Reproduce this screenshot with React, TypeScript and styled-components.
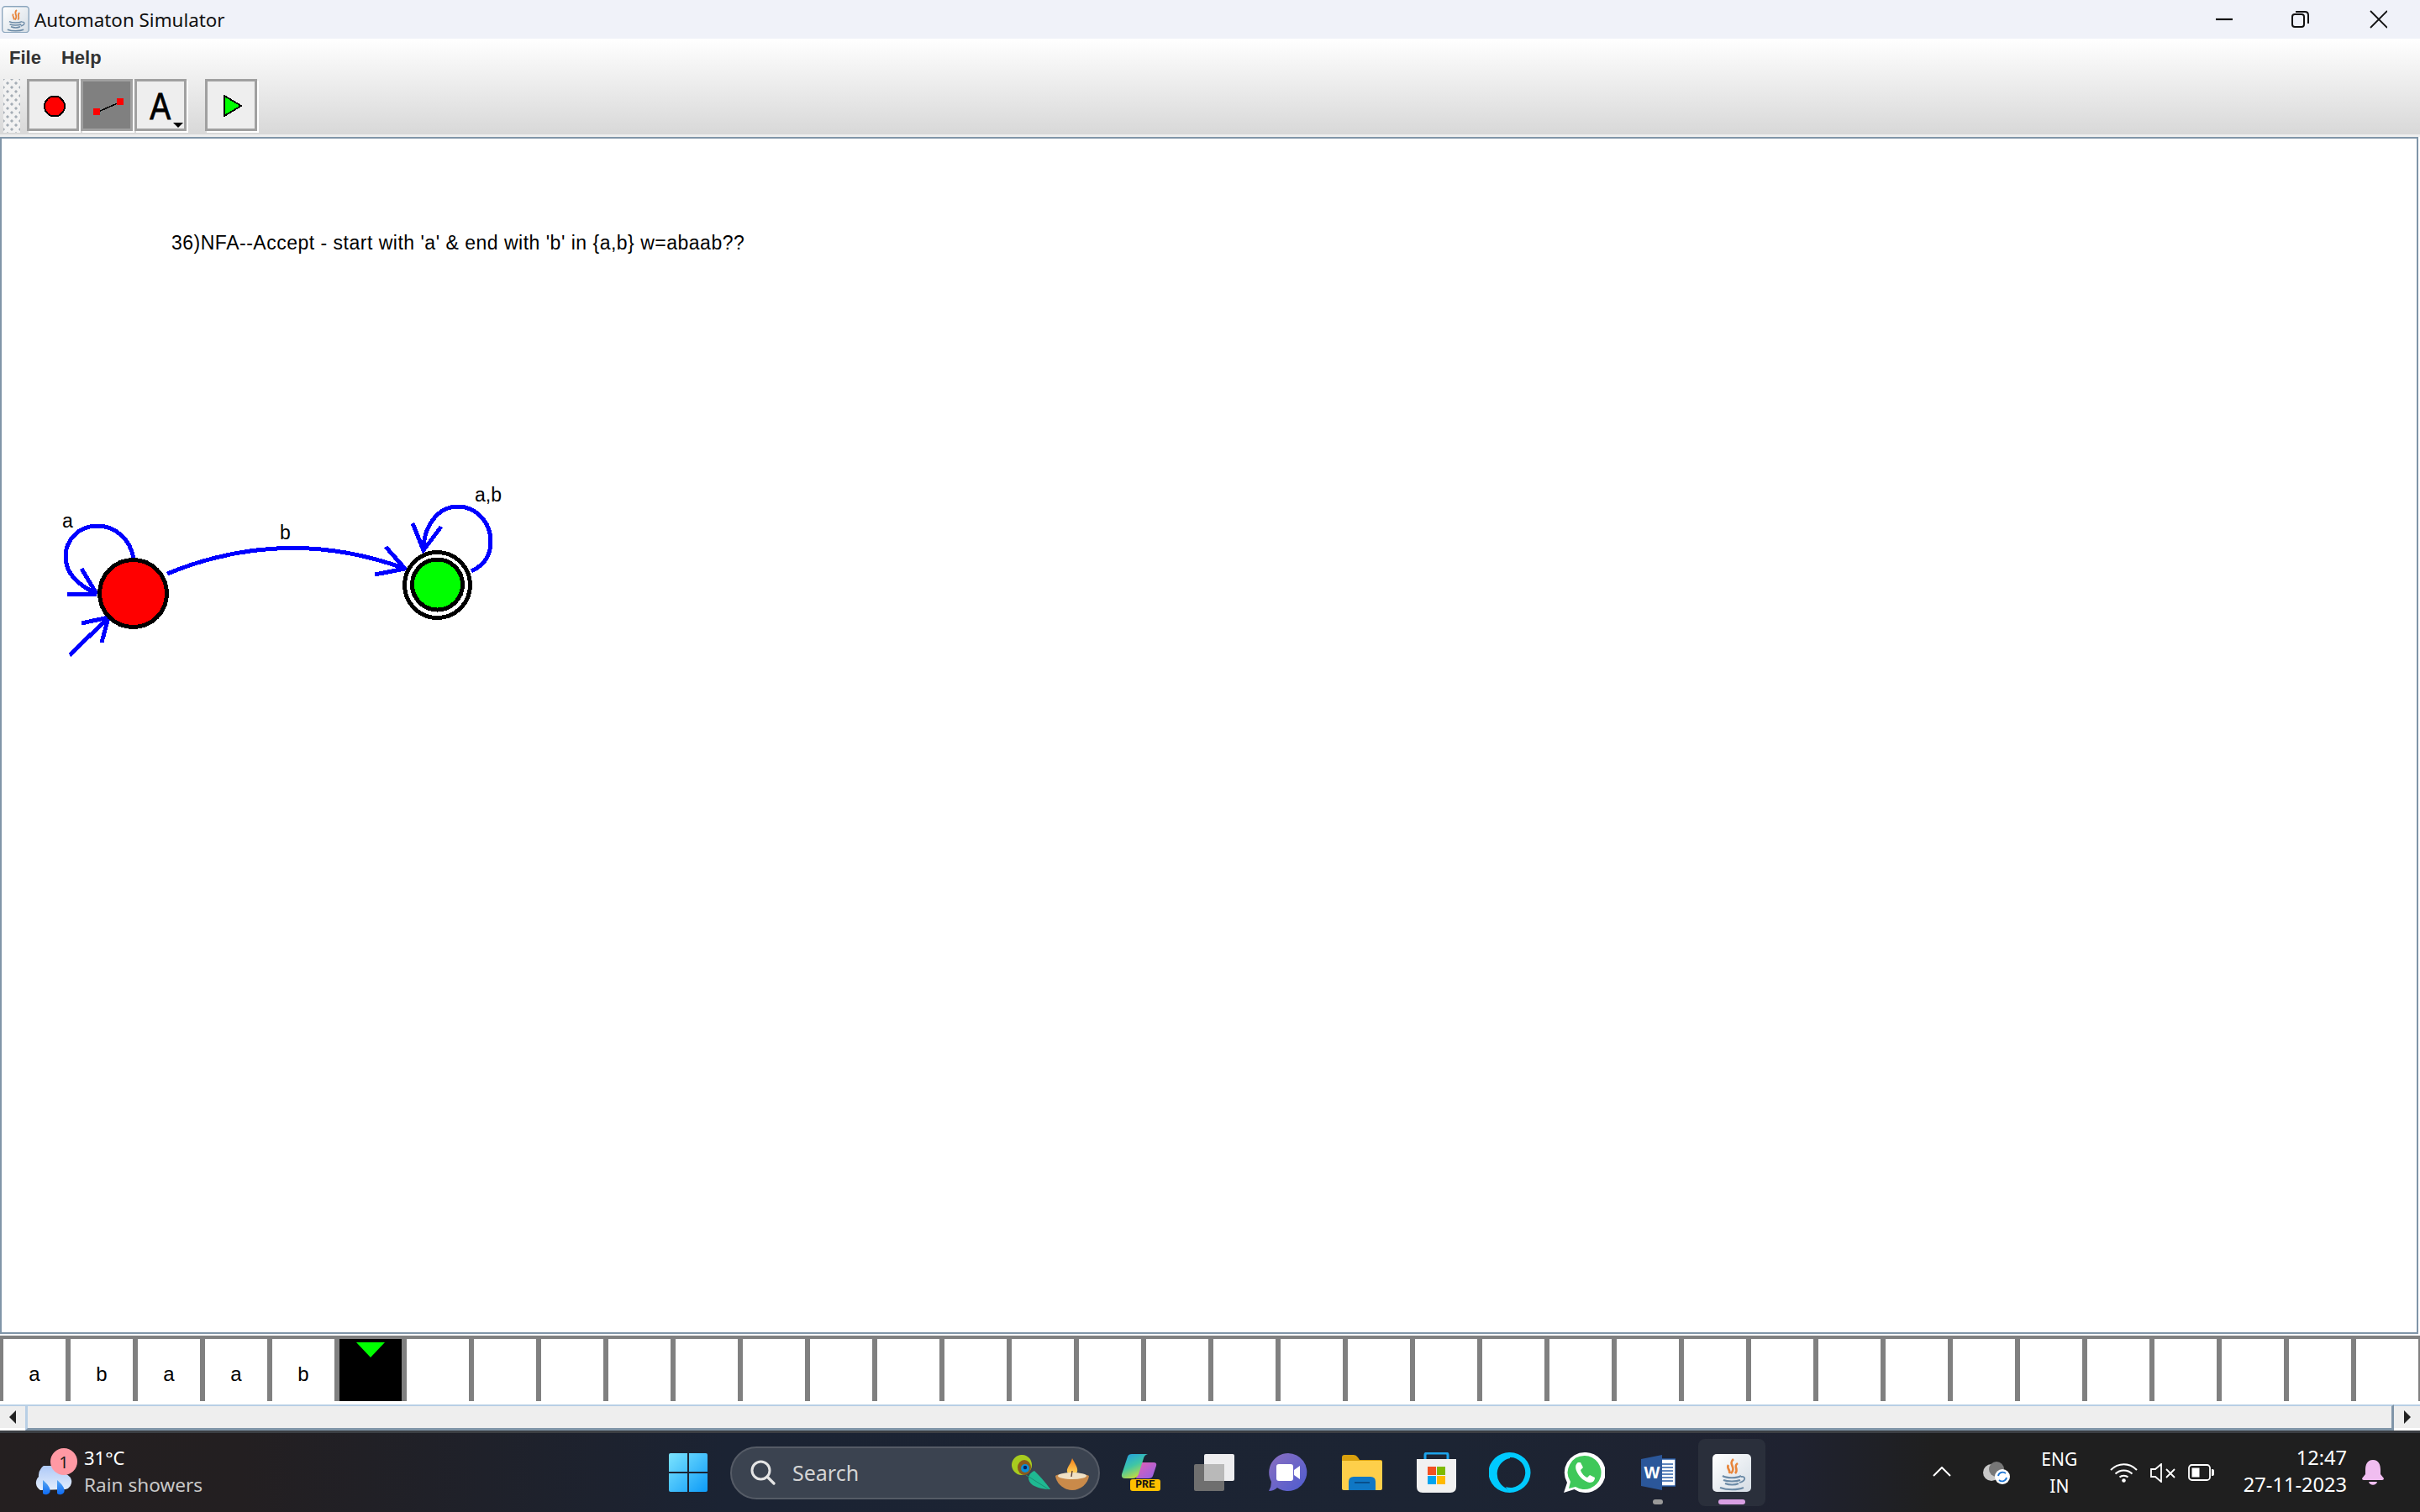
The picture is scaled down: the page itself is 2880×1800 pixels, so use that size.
import styled, {createGlobalStyle} from "styled-components";

const GlobalStyle = createGlobalStyle`
    html, body {
        margin: 0;
        padding: 0;
        background: #ffffff;
    }
`

const uiFont = `"Noto Sans", "Open Sans", sans-serif`
const swingFont = `"Liberation Sans", Arial, sans-serif`

const JavaIcon = ({size}: {size: number}) => (
    <svg width={size} height={size * 47 / 48} viewBox="0 0 48 47">
        <defs>
            <linearGradient id={`tile${size}`} x1="0" y1="0" x2="1" y2="1">
                <stop offset="0" stopColor="#ffffff"/>
                <stop offset="1" stopColor="#d5dde5"/>
            </linearGradient>
        </defs>
        <rect x="1" y="1" width="46" height="45" rx="5" fill={`url(#tile${size})`} stroke="#8ba5bd" strokeWidth={size < 40 ? 2 : 0}/>
        <path d="M26 7 C19 13 30 17 23 24 M31 12 C25 16 33 19 28 24 M20 14 C17 18 23 20 21 24" fill="none" stroke="#e8853a" strokeWidth="2.6"/>
        <path d="M13 27 C18 30 30 30 35 27 M14 32 C19 34 29 34 34 32 M16 36 C21 38 28 38 32 36 M10 41 C18 44 31 44 38 41" fill="none" stroke="#6b8aa6" strokeWidth="2.2"/>
        <path d="M35 28 C41 27 41 33 33 35" fill="none" stroke="#6b8aa6" strokeWidth="1.8"/>
    </svg>
)

const WindowControls = () => (
    <svg width="204" height="24" viewBox="0 0 204 24">
        <path d="M0 12 H20" stroke="#111" strokeWidth="2.2" fill="none"/>
        <rect x="91" y="6" width="14" height="15" rx="3" fill="none" stroke="#111" strokeWidth="2"/>
        <path d="M95 3 H106 Q110 3 110 7 V17" fill="none" stroke="#111" strokeWidth="2"/>
        <path d="M184 2 L204 22 M204 2 L184 22" stroke="#111" strokeWidth="1.8" fill="none"/>
    </svg>
)

const StateIcon = () => (
    <ToolGlyph $x={3} $y={2}>
        <svg width="28" height="27" viewBox="0 0 28 27" shapeRendering="crispEdges">
            <circle cx="14" cy="13.5" r="12" fill="#ff0000" stroke="#000" strokeWidth="2"/>
        </svg>
    </ToolGlyph>
)

const EdgeIcon = () => (
    <ToolGlyph $x={3} $y={4}>
        <svg width="36" height="20" viewBox="0 0 36 20" shapeRendering="crispEdges">
            <path d="M6 16 L31 5" stroke="#000" strokeWidth="1.6"/>
            <rect x="0" y="12" width="8" height="8" fill="#ff0000"/>
            <rect x="28" y="0" width="8" height="8" fill="#ff0000"/>
        </svg>
    </ToolGlyph>
)

const PlayIcon = () => (
    <ToolGlyph $x={3} $y={2}>
        <svg width="22" height="26" viewBox="0 0 22 26" shapeRendering="crispEdges">
            <path d="M1 1 L21 13 L1 25 Z" fill="#00ff00" stroke="#000" strokeWidth="2"/>
        </svg>
    </ToolGlyph>
)

const Diagram = () => (
    <DiagramSvg width="700" height="700" viewBox="0 163 700 700">
        <g fill="none" stroke="#0000ff" strokeWidth="5" shapeRendering="crispEdges">
            <path d="M159 665 C155 640 135 626 116 626 C92 626 78 645 78 662 C78 685 95 697 115 707"/>
            <path d="M97 677 L115 707 M80 707 H115"/>
            <path d="M83 780 L129 735 M97 742 L129 735 L121 765"/>
            <path d="M199 683 Q340 625 482 677"/>
            <path d="M459 651 L482 677 L446 684"/>
            <path d="M561 680 C578 672 584 660 584 645 C584 620 565 603 545 603 C522 603 504 625 504 655"/>
            <path d="M491 623 L504 655 L525 627"/>
        </g>
        <g shapeRendering="crispEdges" stroke="#000" strokeWidth="5">
            <circle cx="158.5" cy="706.5" r="40" fill="#ff0000"/>
            <circle cx="520.5" cy="696.5" r="39" fill="#ffffff"/>
            <circle cx="520.5" cy="696" r="30" fill="#00ff00"/>
        </g>
        <DiagramLabel x="74" y="628">a</DiagramLabel>
        <DiagramLabel x="333" y="642">b</DiagramLabel>
        <DiagramLabel x="565" y="597">a,b</DiagramLabel>
    </DiagramSvg>
)

const Weather = () => (
    <svg width="48" height="38" viewBox="0 0 48 38">
        <defs>
            <linearGradient id="cloud" x1="0" y1="0" x2="0" y2="1">
                <stop offset="0" stopColor="#a9c6f7"/>
                <stop offset="1" stopColor="#e3edfc"/>
            </linearGradient>
            <linearGradient id="drop" x1="0" y1="0" x2="0" y2="1">
                <stop offset="0" stopColor="#5aa7f0"/>
                <stop offset="1" stopColor="#0d6bf5"/>
            </linearGradient>
        </defs>
        <path d="M10 29 A10 10 0 0 1 8 13 A14 14 0 0 1 36 10 A9 9 0 0 1 40 28 Z" fill="url(#cloud)"/>
        <path d="M13 17 C20 23 23 28 21 32 A5.5 5.5 0 0 1 13 33 Z" fill="url(#drop)"/>
        <path d="M30 17 C37 23 40 28 38 32 A5.5 5.5 0 0 1 30 33 Z" fill="url(#drop)"/>
    </svg>
)

const WinLogo = () => (
    <svg width="46" height="46" viewBox="0 0 46 46">
        <defs>
            <linearGradient id="win" x1="0" y1="0" x2="1" y2="1">
                <stop offset="0" stopColor="#7ce4ff"/>
                <stop offset="1" stopColor="#0d9bf7"/>
            </linearGradient>
        </defs>
        <path d="M0 2 Q0 0 2 0 H22 V22 H0 Z M24 0 H44 Q46 0 46 2 V22 H24 Z M0 24 H22 V46 H2 Q0 46 0 44 Z M24 24 H46 V44 Q46 46 44 46 H24 Z" fill="url(#win)"/>
    </svg>
)

const Magnifier = () => (
    <svg width="30" height="30" viewBox="0 0 30 30">
        <circle cx="12.5" cy="12.5" r="10.5" fill="none" stroke="#e4e4e4" strokeWidth="3"/>
        <path d="M20 20 L28 28" stroke="#e4e4e4" strokeWidth="3.2" strokeLinecap="round"/>
    </svg>
)

const Feather = () => (
    <svg width="46" height="42" viewBox="0 0 46 42">
        <path d="M46 41 C38 41 30 39 25 36 C21 33 20 30 20 27 C20 24 24 20 27 19 C32 24 40 32 46 41 Z" fill="#1fb892"/>
        <ellipse cx="12" cy="12" rx="12" ry="12" transform="rotate(-20 12 12)" fill="#a7cc1f"/>
        <ellipse cx="15" cy="15" rx="8" ry="9" fill="#8a5a1c"/>
        <circle cx="16" cy="16" r="5" fill="#0b8fd8"/>
        <circle cx="16" cy="15" r="2.2" fill="#08225f"/>
        <path d="M17 24 L44 41" stroke="#1a8f74" strokeWidth="1"/>
    </svg>
)

const Diya = () => (
    <svg width="40" height="38" viewBox="0 0 40 38">
        <defs>
            <linearGradient id="flame" x1="0" y1="0" x2="0" y2="1">
                <stop offset="0" stopColor="#f57f17"/>
                <stop offset="1" stopColor="#ffd75e"/>
            </linearGradient>
        </defs>
        <path d="M20 0 C24 8 27 11 26 16 C25 20 15 20 14 16 C13 11 18 8 20 0 Z" fill="url(#flame)"/>
        <path d="M0 21 C6 17 34 17 40 21 C39 30 30 38 20 38 C10 38 1 30 0 21 Z" fill="#c98a4a"/>
        <ellipse cx="20" cy="21" rx="17" ry="4" fill="#efe0c4"/>
        <path d="M20 15 L19 22" stroke="#5d4037" strokeWidth="1.4"/>
    </svg>
)

const Copilot = () => (
    <CopilotWrap>
        <svg width="43" height="30" viewBox="0 0 43 30">
            <defs>
                <linearGradient id="cpA" x1="0" y1="0" x2="0.5" y2="1">
                    <stop offset="0" stopColor="#1f9be8"/>
                    <stop offset="0.55" stopColor="#3fc6a5"/>
                    <stop offset="1" stopColor="#c9dc3c"/>
                </linearGradient>
                <linearGradient id="cpB" x1="0" y1="0" x2="1" y2="1">
                    <stop offset="0" stopColor="#e85fb0"/>
                    <stop offset="1" stopColor="#8f62e8"/>
                </linearGradient>
            </defs>
            <path d="M23 10 H39 Q43 10 42 14 L38 26 Q37 29 33 29 H18 Z" fill="url(#cpB)"/>
            <path d="M8 3 Q9 0 13 0 H32 Q28 1 27 5 L21 24 Q19 29 14 29 H5 Q0 29 1 24 Z" fill="url(#cpA)"/>
        </svg>
        <PreBadge>PRE</PreBadge>
    </CopilotWrap>
)

const TaskView = () => (
    <svg width="48" height="44" viewBox="0 0 48 44">
        <rect x="0" y="12" width="36" height="32" rx="2" fill="#6f6f6f"/>
        <rect x="12" y="0" width="36" height="32" rx="2" fill="#ffffff" fillOpacity="0.92"/>
        <rect x="12" y="12" width="24" height="20" fill="#b9b9b9"/>
    </svg>
)

const Meet = () => (
    <svg width="46" height="46" viewBox="0 0 46 46">
        <defs>
            <linearGradient id="meet" x1="0" y1="0" x2="1" y2="1">
                <stop offset="0" stopColor="#8b6fc0"/>
                <stop offset="1" stopColor="#4d5cd0"/>
            </linearGradient>
        </defs>
        <path d="M23 0 A22.5 22.5 0 1 1 10 41 Q6 45 0 45 Q3 40 3 34 A23 23 0 0 1 23 0 Z" fill="url(#meet)"/>
        <rect x="9" y="13" width="20" height="20" rx="3" fill="#fff"/>
        <path d="M30 20 L37 15 V31 L30 26 Z" fill="#fff"/>
    </svg>
)

const Folder = () => (
    <svg width="48" height="42" viewBox="0 0 48 42">
        <path d="M0 3 Q0 0 3 0 H14 Q17 0 19 3 L21 6 H46 Q48 6 48 8 V14 H0 Z" fill="#d9a00d"/>
        <path d="M0 7 H46 Q48 7 48 9 V40 Q48 42 46 42 H2 Q0 42 0 40 Z" fill="#fecf4a"/>
        <path d="M8 42 V32 Q8 26 14 26 H34 Q40 26 40 32 V42 Z" fill="#0f77c4"/>
        <path d="M15 33 H33" stroke="#084f8c" strokeWidth="2"/>
    </svg>
)

const Store = () => (
    <svg width="47" height="48" viewBox="0 0 47 48">
        <path d="M10 10 V3 Q10 1 12 1 H35 Q37 1 37 3 V10" fill="none" stroke="#1da4ec" strokeWidth="3"/>
        <path d="M0 8 H47 V41 Q47 48 40 48 H7 Q0 48 0 41 Z" fill="#f1f1f1"/>
        <rect x="13" y="17" width="10" height="10" fill="#f25022"/>
        <rect x="24" y="17" width="10" height="10" fill="#7fba00"/>
        <rect x="13" y="28" width="10" height="10" fill="#00a4ef"/>
        <rect x="24" y="28" width="10" height="10" fill="#ffb900"/>
    </svg>
)

const Alexa = () => (
    <svg width="50" height="48" viewBox="0 0 50 48">
        <path d="M25 0 A25 24 0 1 1 24 48 L20 41 A17.5 18 0 1 0 25 6 Z M25 0 A25 24 0 0 0 24 48 L21 43 A19 19 0 0 1 25 7 Z" fill="#00caff"/>
    </svg>
)

const WhatsApp = () => (
    <svg width="49" height="48" viewBox="0 0 49 48">
        <path d="M25 0 A24 24 0 1 1 12.5 44 L0 48 L4 36 A24 24 0 0 1 25 0 Z" fill="#ffffff"/>
        <path d="M25 4 A20 20 0 1 1 14 41 L6 43 L8 35 A20 20 0 0 1 25 4 Z" fill="#3fc85a"/>
        <path d="M17 12 C14 14 13 18 16 24 C19 30 25 35 31 36 C35 36 37 33 37 30 L31 27 L28 30 C25 29 21 25 20 21 L23 18 L20 12 Z" fill="#ffffff"/>
    </svg>
)

const Word = () => (
    <WordWrap>
        <svg width="41" height="42" viewBox="0 0 41 42">
            <rect x="14" y="5" width="27" height="32" fill="#ffffff" stroke="#2b5fa8" strokeWidth="1.5"/>
            <path d="M25 11 H38 M25 15 H38 M25 19 H38 M25 23 H38 M25 27 H38 M25 31 H38" stroke="#2b5fa8" strokeWidth="1.6"/>
            <path d="M0 5 L25 0 V42 L0 37 Z" fill="#2b579a"/>
        </svg>
        <WordLetter>W</WordLetter>
    </WordWrap>
)

const TrayCloud = () => (
    <svg width="33" height="27" viewBox="0 0 33 27">
        <circle cx="11" cy="13" r="10" fill="#c8c8c8"/>
        <circle cx="17" cy="9" r="9" fill="#777"/>
        <circle cx="24" cy="18" r="9" fill="#ffffff"/>
        <path d="M19 17 A5.5 5.5 0 0 1 28 14 M29 19 A5.5 5.5 0 0 1 20 22" fill="none" stroke="#1b74d4" strokeWidth="1.8"/>
    </svg>
)

const Wifi = () => (
    <svg width="33" height="23" viewBox="0 0 33 23">
        <path d="M1 8 C10 -1 23 -1 32 8 M6.5 12.5 C12 7 21 7 26.5 12.5 M11.5 16.5 C14 14 19 14 21.5 16.5" fill="none" stroke="#fff" strokeWidth="2"/>
        <circle cx="16.5" cy="20.5" r="2.3" fill="#fff"/>
    </svg>
)

const Mute = () => (
    <svg width="30" height="23" viewBox="0 0 30 23">
        <path d="M1 7 H6 L13 1 V22 L6 16 H1 Z" fill="none" stroke="#fff" strokeWidth="1.8"/>
        <path d="M19 7 L29 17 M29 7 L19 17" stroke="#fff" strokeWidth="1.8"/>
    </svg>
)

const Battery = () => (
    <svg width="31" height="20" viewBox="0 0 31 20">
        <rect x="1" y="1" width="25" height="18" rx="3.5" fill="none" stroke="#fff" strokeWidth="1.8"/>
        <rect x="4.5" y="4.5" width="9" height="11" fill="#fff"/>
        <path d="M28 6 H29 Q31 6 31 8 V12 Q31 14 29 14 H28 Z" fill="#fff"/>
    </svg>
)

const Bell = () => (
    <svg width="26" height="30" viewBox="0 0 26 30">
        <path d="M13 0 C20 0 22 6 22 12 V17 L26 22 Q26 24 24 24 H2 Q0 24 0 22 L4 17 V12 C4 6 6 0 13 0 Z" fill="#f0bdf0"/>
        <path d="M8 26 H18 C17 31 9 31 8 26 Z" fill="#f0bdf0"/>
    </svg>
)

const tape = ["a", "b", "a", "a", "b"]

export default function App() {
    const cells = Array.from({length: 36}, (_, i) => i)

    return (
        <Page>
            <GlobalStyle/>
            <TitleBar>
                <TitleLeft>
                    <JavaIcon size={33}/>
                    <TitleText>Automaton Simulator</TitleText>
                </TitleLeft>
                <WindowControls/>
            </TitleBar>

            <Chrome>
                <MenuBar>
                    <MenuItem>File</MenuItem>
                    <MenuItem>Help</MenuItem>
                </MenuBar>
                <ToolBar>
                    <Grip/>
                    <ToolButton><StateIcon/></ToolButton>
                    <ToolButton $active><EdgeIcon/></ToolButton>
                    <ToolButton>
                        <ToolLetter>A</ToolLetter>
                        <DropArrow/>
                    </ToolButton>
                    <ToolButton $spaced><PlayIcon/></ToolButton>
                </ToolBar>
            </Chrome>
            <ChromeEdge/>

            <Canvas>
                <Heading>36)NFA--Accept - start with 'a' &amp; end with 'b' in {"{a,b}"} w=abaab??</Heading>
                <Diagram/>
            </Canvas>

            <Tape>
                {cells.map(i => (
                    <Cell key={i} $head={i === tape.length}>
                        {i === tape.length ? <HeadMark/> : tape[i]}
                    </Cell>
                ))}
            </Tape>

            <ScrollBar>
                <ScrollButton><ArrowLeft/></ScrollButton>
                <ScrollTrack/>
                <ScrollButton $right><ArrowRight/></ScrollButton>
            </ScrollBar>

            <TaskBar>
                <WeatherBox>
                    <WeatherIcon>
                        <Weather/>
                        <Badge>1</Badge>
                    </WeatherIcon>
                    <WeatherText>
                        <Temp>31°C</Temp>
                        <Forecast>Rain showers</Forecast>
                    </WeatherText>
                </WeatherBox>

                <TaskIcons>
                    <TaskItem><WinLogo/></TaskItem>
                    <SearchPill>
                        <Magnifier/>
                        <SearchText>Search</SearchText>
                        <SearchArt><Feather/><Diya/></SearchArt>
                    </SearchPill>
                    <TaskItem><Copilot/></TaskItem>
                    <TaskItem><TaskView/></TaskItem>
                    <TaskItem><Meet/></TaskItem>
                    <TaskItem><Folder/></TaskItem>
                    <TaskItem><Store/></TaskItem>
                    <TaskItem><Alexa/></TaskItem>
                    <TaskItem><WhatsApp/></TaskItem>
                    <TaskItem><Word/><RunDot/></TaskItem>
                    <TaskItem $active><JavaIcon size={48}/><RunDot $active/></TaskItem>
                </TaskIcons>

                <Tray>
                    <Chevron viewBox="0 0 22 12" width="22" height="12">
                        <path d="M1 11 L11 1 L21 11" fill="none" stroke="#fff" strokeWidth="2"/>
                    </Chevron>
                    <TrayCloudBox><TrayCloud/></TrayCloudBox>
                    <Lang><span>ENG</span><span>IN</span></Lang>
                    <Status><Wifi/><Mute/><Battery/></Status>
                    <Clock><span>12:47</span><span>27-11-2023</span></Clock>
                    <Bell/>
                </Tray>
            </TaskBar>
        </Page>
    )
}

const Page = styled.div`
    display: flex;
    flex-direction: column;
    width: 2880px;
    height: 1800px;
    overflow: hidden;
    background: #ffffff;
`

const TitleBar = styled.header`
    flex: 0 0 46px;
    display: flex;
    align-items: center;
    justify-content: space-between;
    padding: 0 39px 0 2px;
    background: #f0f2f9;
`

const TitleLeft = styled.div`
    display: flex;
    align-items: center;
    gap: 6px;
`

const TitleText = styled.span`
    font: 400 22.4px ${uiFont};
    color: #111111;
`

const Chrome = styled.div`
    flex: 0 0 114px;
    display: flex;
    flex-direction: column;
    background: linear-gradient(#ffffff, #d8d8d8);
`

const MenuBar = styled.nav`
    flex: 0 0 48px;
    display: flex;
    align-items: center;
    gap: 24px;
    padding: 0 0 3px 11px;
    box-sizing: border-box;
`

const MenuItem = styled.span`
    font: 700 22px ${swingFont};
    color: #333333;
`

const ToolBar = styled.div`
    display: flex;
    align-items: flex-start;
    gap: 2px;
    padding-left: 4px;
`

const Grip = styled.div`
    width: 20px;
    height: 64px;
    margin-right: 6px;
    background-color: #f2f2f2;
    background-image:
        radial-gradient(#a5adb5 1.4px, transparent 1.8px),
        radial-gradient(#a5adb5 1.4px, transparent 1.8px);
    background-size: 10px 10px;
    background-position: 0 0, 5px 5px;
`

const ToolButton = styled.div<{$active?: boolean; $spaced?: boolean}>`
    position: relative;
    box-sizing: border-box;
    width: 62px;
    height: 62px;
    display: flex;
    align-items: center;
    justify-content: center;
    margin-left: ${p => (p.$spaced ? "20px" : "0")};
    background: ${p => (p.$active ? "#808080" : "#eeeeee")};
    border: 3px solid #a0a0a0;
    box-shadow: 2px 2px 0 #ffffff;
`

const ToolGlyph = styled.span<{$x: number; $y: number}>`
    display: flex;
    margin: ${p => p.$y}px 0 0 ${p => p.$x}px;
`

const ToolLetter = styled.span`
    font: 400 44px/44px ${swingFont};
    color: #000000;
    transform: scaleX(0.85);
    -webkit-text-stroke: 0.8px #000000;
    margin-top: 3px;
`

const DropArrow = styled.span`
    position: absolute;
    right: 1px;
    bottom: 1px;
    border-left: 6px solid transparent;
    border-right: 6px solid transparent;
    border-top: 6px solid #000000;
`

const ChromeEdge = styled.div`
    flex: 0 0 3px;
    background: #eeeeee;
`

const Canvas = styled.main`
    position: relative;
    flex: 1;
    background: #ffffff;
    box-shadow: inset 2px 2px 0 #8095a8, inset -2px -2px 0 #8095a8;
    margin-right: 2px;
`

const Heading = styled.div`
    position: absolute;
    left: 204px;
    top: 113px;
    font: 400 23px ${swingFont};
    letter-spacing: 0.5px;
    color: #000000;
    white-space: nowrap;
`

const DiagramSvg = styled.svg`
    position: absolute;
    left: 0;
    top: 0;
`

const DiagramLabel = styled.text`
    font: 400 23px ${swingFont};
    fill: #000000;
`

const Tape = styled.section`
    flex: 0 0 74px;
    display: flex;
    gap: 6px;
    margin-top: 2px;
    padding-left: 4px;
    border-top: 4px solid #808080;
    overflow: hidden;
    background: #808080;
`

const Cell = styled.div<{$head?: boolean}>`
    position: relative;
    flex: 0 0 74px;
    height: 74px;
    display: flex;
    align-items: flex-end;
    justify-content: center;
    padding-bottom: 20px;
    box-sizing: border-box;
    background: ${p => (p.$head ? "#000000" : "#ffffff")};
    font: 400 24px/24px ${swingFont};
    color: #000000;
`

const HeadMark = styled.span`
    position: absolute;
    top: 4px;
    left: 20px;
    border-left: 17px solid transparent;
    border-right: 17px solid transparent;
    border-top: 18px solid #00ff00;
`

const ScrollBar = styled.div`
    flex: 0 0 31px;
    display: flex;
    margin-top: 4px;
    background: #ffffff;
`

const ScrollButton = styled.div<{$right?: boolean}>`
    flex: 0 0 ${p => (p.$right ? "31px" : "30px")};
    display: flex;
    align-items: center;
    justify-content: center;
    box-sizing: border-box;
    background: #eeeeee;
    border-top: 2px solid #b8cfe5;
    border-bottom: 3px solid #ffffff;
`

const ScrollTrack = styled.div`
    flex: 1;
    box-sizing: border-box;
    background: #eeeeee;
    border-top: 2px solid #b8cfe5;
    border-bottom: 3px solid #8095a8;
    border-left: 3px solid #b8cfe5;
    border-right: 3px solid #8095a8;
`

const ArrowLeft = styled.span`
    border-top: 8px solid transparent;
    border-bottom: 8px solid transparent;
    border-right: 8px solid #222222;
`

const ArrowRight = styled.span`
    border-top: 8px solid transparent;
    border-bottom: 8px solid transparent;
    border-left: 8px solid #222222;
`

const TaskBar = styled.footer`
    flex: 0 0 97px;
    box-sizing: border-box;
    display: grid;
    grid-template-columns: 1fr auto 1fr;
    align-items: center;
    border-top: 3px solid #3c3f44;
    background: linear-gradient(90deg, #241f20 0%, #231f21 10%, #1b2333 30%, #1c2433 60%, #1f2230 74%, #1f1f1f 80%);
    font-family: ${uiFont};
    color: #ffffff;
`

const WeatherBox = styled.div`
    display: flex;
    align-items: center;
    gap: 15px;
    padding-left: 38px;
`

const WeatherIcon = styled.div`
    position: relative;
    display: flex;
    margin-top: 22px;
`

const Badge = styled.span`
    position: absolute;
    left: 22px;
    top: -21px;
    width: 32px;
    height: 32px;
    border-radius: 50%;
    display: flex;
    align-items: center;
    justify-content: center;
    background: #ff99a4;
    color: #1c1c1c;
    font-size: 20px;
`

const WeatherText = styled.div`
    display: flex;
    flex-direction: column;
    gap: 3px;
    margin: -4px 0 0 -1px;
`

const Temp = styled.span`
    font-size: 22px;
    line-height: 30px;
`

const Forecast = styled.span`
    font-size: 22.6px;
    line-height: 30px;
    color: #c8c8c8;
`

const TaskIcons = styled.div`
    display: flex;
    align-items: center;
    gap: 8px;
`

const TaskItem = styled.div<{$active?: boolean}>`
    position: relative;
    flex: 0 0 80px;
    height: 80px;
    box-sizing: border-box;
    display: flex;
    align-items: center;
    justify-content: center;
    border-radius: 8px;
    background: ${p => (p.$active ? "#2a2f3b" : "transparent")};
`

const SearchPill = styled.div`
    flex: 0 0 440px;
    height: 63px;
    box-sizing: border-box;
    display: flex;
    align-items: center;
    margin-left: 2px;
    padding: 0 11px 0 22px;
    border: 2px solid #555b66;
    border-radius: 32px;
    background: #3b4350;
`

const SearchText = styled.span`
    margin-left: 20px;
    font-size: 25px;
    color: #d4d4d4;
`

const SearchArt = styled.div`
    margin-left: auto;
    display: flex;
    align-items: flex-end;
    gap: 6px;
`

const CopilotWrap = styled.div`
    position: relative;
    width: 46px;
    height: 44px;
`

const PreBadge = styled.span`
    position: absolute;
    right: -1px;
    bottom: 0;
    width: 36px;
    height: 14px;
    border-radius: 3px;
    background: #ffc000;
    color: #111111;
    font: 700 13px/14px "Liberation Mono", monospace;
    text-align: center;
`

const WordWrap = styled.div`
    position: relative;
    display: flex;
`

const WordLetter = styled.span`
    position: absolute;
    left: 4px;
    top: 10px;
    font: 700 20px/22px ${swingFont};
    color: #ffffff;
`

const RunDot = styled.span<{$active?: boolean}>`
    position: absolute;
    left: 50%;
    bottom: 2px;
    width: ${p => (p.$active ? "32px" : "12px")};
    height: 6px;
    border-radius: 3px;
    transform: translateX(-50%);
    background: ${p => (p.$active ? "#d89fe3" : "#9a9a9a")};
`

const Tray = styled.div`
    display: flex;
    align-items: center;
    justify-content: flex-end;
    padding-right: 43px;
`

const Chevron = styled.svg`
    margin-right: 37px;
    margin-top: -2px;
`

const TrayCloudBox = styled.div`
    display: flex;
    margin-right: 36px;
`

const Lang = styled.div`
    display: flex;
    flex-direction: column;
    align-items: center;
    width: 46px;
    font-size: 21px;
    line-height: 32px;
    margin-right: 37px;
`

const Status = styled.div`
    display: flex;
    align-items: center;
    gap: 15px;
    margin-right: 35px;
`

const Clock = styled.div`
    display: flex;
    flex-direction: column;
    align-items: flex-end;
    font-size: 23.6px;
    line-height: 32px;
    margin: -4px 18px 0 0;
`
